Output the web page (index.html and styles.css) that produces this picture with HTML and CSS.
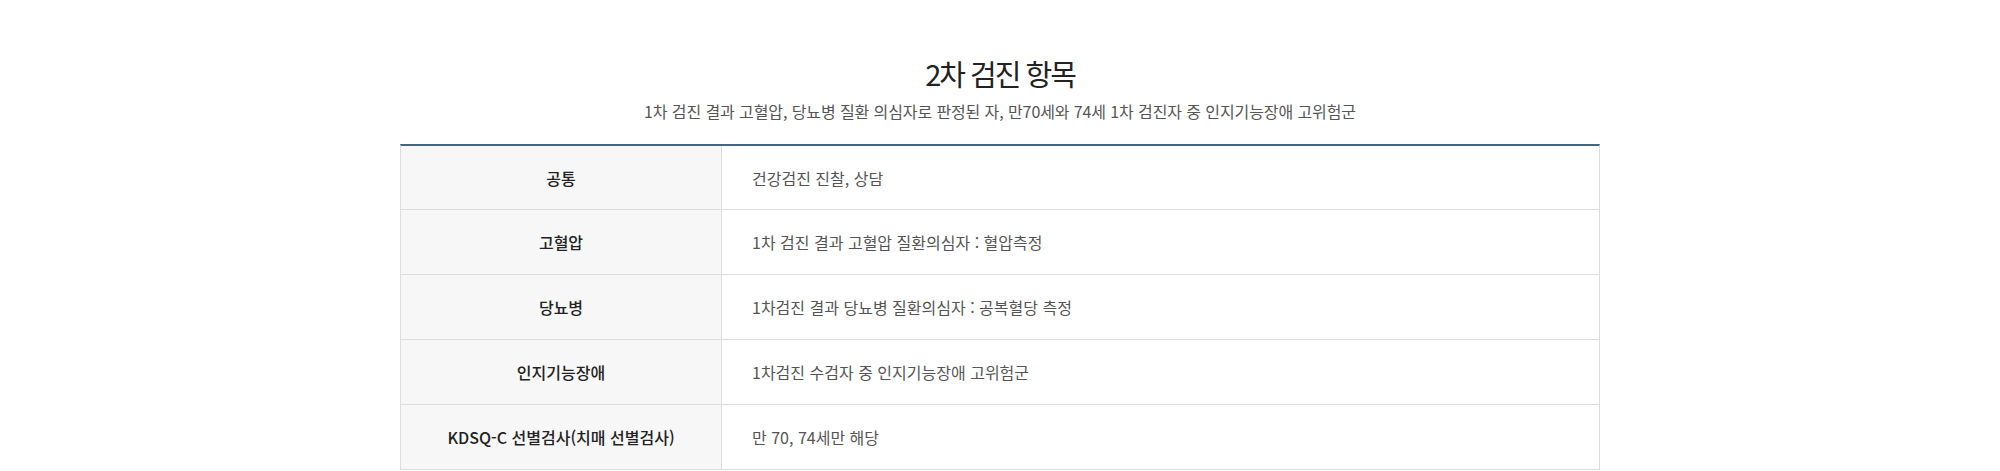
FILE: index.html
```html
<!DOCTYPE html>
<html lang="ko">

<head>
    <meta charset="UTF-8">
    <meta name="viewport" content="width=device-width, initial-scale=1.0">
    <title>2차 검진 항목</title>
    <link rel="stylesheet" href="styles.css">
</head>

<body>
    <div class="check_wrap">
        <div class="check_title">
            <strong>2차 검진 항목</strong>
            <p>1차 검진 결과 고혈압, 당뇨병 질환 의심자로 판정된 자, 만70세와 74세 1차 검진자 중 인지기능장애 고위험군</p>
        </div>
        <div class="check_list">
            <div class="check_row">
                <div class="item">공통</div>
                <div class="desc">건강검진 진찰, 상담</div>
            </div>
            <div class="check_row">
                <div class="item">고혈압</div>
                <div class="desc">1차 검진 결과 고혈압 질환의심자 : 혈압측정</div>
            </div>
            <div class="check_row">
                <div class="item">당뇨병</div>
                <div class="desc">1차검진 결과 당뇨병 질환의심자 : 공복혈당 측정</div>
            </div>
            <div class="check_row">
                <div class="item">인지기능장애</div>
                <div class="desc">1차검진 수검자 중 인지기능장애 고위험군</div>
            </div>
            <div class="check_row">
                <div class="item">KDSQ-C 선별검사(치매 선별검사)</div>
                <div class="desc">만 70, 74세만 해당</div>
            </div>
        </div>
    </div>
</body>

</html>
```

FILE: styles.css
```css
* {
    margin: 0;
    padding: 0;
    box-sizing: border-box;
}

body {
    font-family: "Noto Sans CJK KR", "Noto Sans", sans-serif;
    background: #fff;
    color: #333;
}

.check_wrap {
    width: 1200px;
    margin: 0 auto;
    padding-top: 53px;
}

.check_title {
    text-align: center;
}

.check_title strong {
    display: block;
    font-size: 29px;
    line-height: 40px;
    font-weight: 400;
    letter-spacing: -2px;
    color: #222;
}

.check_title p {
    margin-top: 6px;
    font-size: 16px;
    line-height: 24px;
    letter-spacing: -0.1px;
    color: #555;
}

.check_list {
    margin-top: 21px;
    border-top: 2px solid #46657f;
    border-left: 1px solid #ddd;
    border-right: 1px solid #ddd;
}

.check_row {
    display: flex;
    height: 65px;
    border-bottom: 1px solid #ddd;
}

.check_row:first-child {
    height: 64px;
}

.check_row .item {
    flex: 0 0 321px;
    display: flex;
    align-items: center;
    justify-content: center;
    background: #f7f7f7;
    border-right: 1px solid #ddd;
    font-size: 16px;
    font-weight: 500;
    color: #222;
}

.check_row .desc {
    flex: 1;
    display: flex;
    align-items: center;
    padding-left: 30px;
    font-size: 16px;
    color: #555;
}
```
